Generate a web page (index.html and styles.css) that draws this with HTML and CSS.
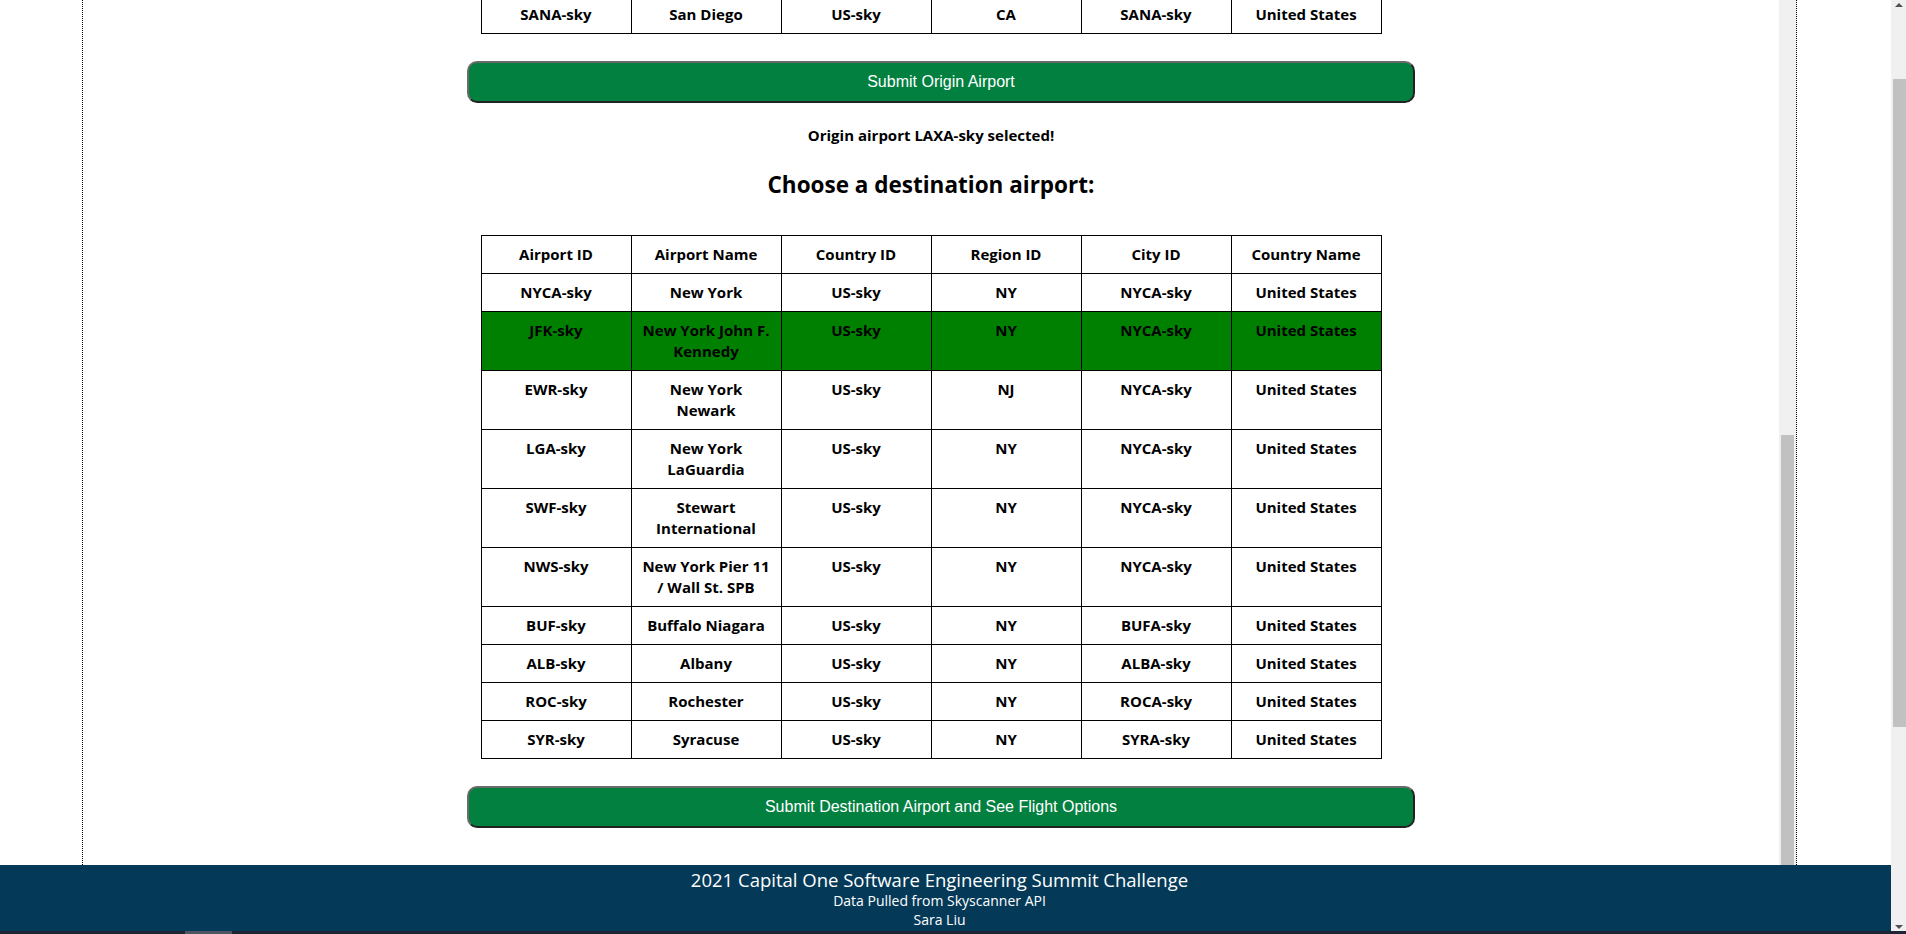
FILE: index.html
```html
<!DOCTYPE html>
<html lang="en">
<head>
<meta charset="utf-8">
<title>Flight Finder</title>
<link rel="stylesheet" href="styles.css">
</head>
<body>
<div class="screen">
  <div class="upper">
    <div class="page">
      <div class="viewport">
        <div class="side"></div>
        <div class="frame">
          <div class="content">
            <table class="airports origin">
              <colgroup><col><col><col><col><col><col></colgroup>
              <tbody>
                <tr><td>SANA-sky</td><td>San Diego</td><td>US-sky</td><td>CA</td><td>SANA-sky</td><td>United States</td></tr>
              </tbody>
            </table>
            <div class="btn-row"><button class="btn">Submit Origin Airport</button></div>
            <p class="msg">Origin airport LAXA-sky selected!</p>
            <h2 class="heading">Choose a destination airport:</h2>
            <table class="airports dest">
              <colgroup><col><col><col><col><col><col></colgroup>
              <thead>
                <tr><th>Airport ID</th><th>Airport Name</th><th>Country ID</th><th>Region ID</th><th>City ID</th><th>Country Name</th></tr>
              </thead>
              <tbody>
                <tr><td>NYCA-sky</td><td>New York</td><td>US-sky</td><td>NY</td><td>NYCA-sky</td><td>United States</td></tr>
                <tr class="selected"><td>JFK-sky</td><td>New York John F. Kennedy</td><td>US-sky</td><td>NY</td><td>NYCA-sky</td><td>United States</td></tr>
                <tr><td>EWR-sky</td><td>New York Newark</td><td>US-sky</td><td>NJ</td><td>NYCA-sky</td><td>United States</td></tr>
                <tr><td>LGA-sky</td><td>New York LaGuardia</td><td>US-sky</td><td>NY</td><td>NYCA-sky</td><td>United States</td></tr>
                <tr><td>SWF-sky</td><td>Stewart International</td><td>US-sky</td><td>NY</td><td>NYCA-sky</td><td>United States</td></tr>
                <tr><td>NWS-sky</td><td>New York Pier 11 / Wall St. SPB</td><td>US-sky</td><td>NY</td><td>NYCA-sky</td><td>United States</td></tr>
                <tr><td>BUF-sky</td><td>Buffalo Niagara</td><td>US-sky</td><td>NY</td><td>BUFA-sky</td><td>United States</td></tr>
                <tr><td>ALB-sky</td><td>Albany</td><td>US-sky</td><td>NY</td><td>ALBA-sky</td><td>United States</td></tr>
                <tr><td>ROC-sky</td><td>Rochester</td><td>US-sky</td><td>NY</td><td>ROCA-sky</td><td>United States</td></tr>
                <tr><td>SYR-sky</td><td>Syracuse</td><td>US-sky</td><td>NY</td><td>SYRA-sky</td><td>United States</td></tr>
              </tbody>
            </table>
            <div class="btn-row"><button class="btn">Submit Destination Airport and See Flight Options</button></div>
          </div>
          <div class="inner-scroll"><div class="inner-thumb"></div></div>
        </div>
        <div class="side"></div>
      </div>
      <footer class="footer">
        <div class="f-title">2021 Capital One Software Engineering Summit Challenge</div>
        <div class="f-line">Data Pulled from Skyscanner API</div>
        <div class="f-line">Sara Liu</div>
      </footer>
    </div>
    <div class="outer-scroll">
      <div class="arrow up"></div>
      <div class="outer-track"><div class="outer-thumb"></div></div>
      <div class="arrow down"></div>
    </div>
  </div>
  <div class="bottom-strip"><div class="strip-thumb"></div></div>
</div>
</body>
</html>
```

FILE: styles.css
```css
* { box-sizing: border-box; }
html, body { margin: 0; padding: 0; height: 100%; overflow: hidden; background: #ffffff; }
body { font-family: "Open Sans", "Noto Sans", sans-serif; color: #000; }

.screen { display: flex; flex-direction: column; width: 1906px; height: 934px; }
.upper { display: flex; flex: 1; min-height: 0; }
.page { display: flex; flex-direction: column; width: 1891px; }
.viewport { display: flex; height: 865px; overflow: hidden; }
.side { flex: 1; }
.side:first-child { flex: 0 0 82px; }
.side:last-child { flex: 0 0 94px; }

.frame {
  display: flex;
  width: 1715px;
  border-left: 1px dotted #000;
  border-right: 1px dotted #000;
  overflow: hidden;
}
.content { flex: 1; display: flex; flex-direction: column; align-items: center; }
.inner-scroll { flex: 0 0 17px; background: #f0f0f0; display: flex; flex-direction: column; justify-content: flex-end; padding: 0 2px; }
.inner-thumb { height: 430px; background: #c1c1c1; }

.airports {
  border-collapse: collapse;
  table-layout: fixed;
  width: 901px;
  font-size: 15px;
  font-weight: 700;
  line-height: 21px;
}
.airports col { width: 150px; }
.airports th, .airports td {
  border: 1px solid #000;
  padding: 8px 9px;
  text-align: center;
  vertical-align: top;
  font-weight: 700;
}
.airports .selected td { background: #008000; }
.origin { margin-top: -5px; }

.btn-row { width: 100%; display: flex; justify-content: center; padding-left: 20px; margin-top: 27px; }
.btn {
  width: 948px;
  height: 42px;
  background: #028040;
  color: #fff;
  font-family: "Liberation Sans", Arial, sans-serif;
  font-size: 16px;
  border-radius: 10px;
  border: 2px solid;
  border-color: #6a6a6a #222 #222 #6a6a6a;
  padding: 0;
}

.msg { margin: 22px 0 0; font-size: 15px; font-weight: 700; line-height: 21px; }
.heading { margin: 24px 0 0; font-size: 22.5px; font-weight: 700; line-height: 30px; }
.dest { margin-top: 35px; }

.footer {
  flex: 1;
  background: #043a58;
  color: #fff;
  text-align: center;
  padding: 3px 12px 0 0;
}
.f-title { font-size: 18.5px; line-height: 23px; }
.f-line { font-size: 14px; line-height: 19px; }

.outer-scroll { width: 15px; background: #f0f0f0; display: flex; flex-direction: column; }
.outer-track { flex: 1; padding: 70px 0 0 2px; }
.outer-thumb { height: 648px; background: #c1c1c1; }
.arrow { height: 9px; display: flex; justify-content: center; align-items: center; }
.arrow::before { content: ""; border-left: 4px solid transparent; border-right: 4px solid transparent; }
.arrow.up::before { border-bottom: 4px solid #505050; }
.arrow.down::before { border-top: 4px solid #505050; }

.bottom-strip { height: 3px; background: #1d2535; }
.strip-thumb { margin-left: 185px; width: 47px; height: 3px; background: #4c5663; }
```
